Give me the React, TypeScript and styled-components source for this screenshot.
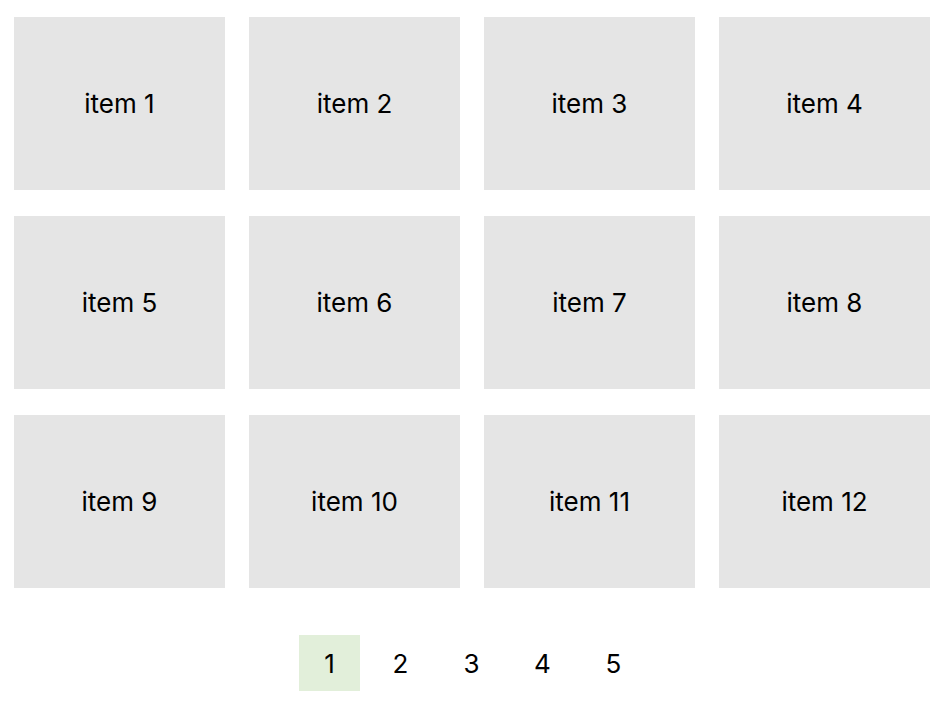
import React from "react";
import styled, { createGlobalStyle } from "styled-components";

const Global = createGlobalStyle`
  html, body { margin: 0; padding: 0; background: #fff; }
  body { font-family: Inter, "Noto Sans", sans-serif; color: #000; }
`;

const Page = styled.div`
  padding: 17px 16px 0 14px;
  display: flex;
  flex-direction: column;
  align-items: center;
`;

const Grid = styled.div`
  align-self: flex-start;
  display: grid;
  grid-template-columns: repeat(4, 211px);
  grid-auto-rows: 173px;
  column-gap: 24px;
  row-gap: 26px;
`;

const Item = styled.div`
  background: #e5e5e5;
  display: flex;
  align-items: center;
  justify-content: center;
  font-size: 26px;
  color: #000;
`;

const Pager = styled.nav`
  margin-top: 47px;
  display: flex;
  gap: 10px;
`;

const PageBtn = styled.div<{ $active?: boolean }>`
  width: 61px;
  height: 56px;
  display: flex;
  align-items: center;
  justify-content: center;
  font-size: 26px;
  background: ${(p) => (p.$active ? "#e2efda" : "transparent")};
`;

export default function App() {
  const items = Array.from({ length: 12 }, (_, i) => i + 1);
  return (
    <>
      <Global />
      <Page>
        <Grid>
          {items.map((n) => (
            <Item key={n}>item {n}</Item>
          ))}
        </Grid>
        <Pager>
          {[1, 2, 3, 4, 5].map((n) => (
            <PageBtn key={n} $active={n === 1}>
              {n}
            </PageBtn>
          ))}
        </Pager>
      </Page>
    </>
  );
}
